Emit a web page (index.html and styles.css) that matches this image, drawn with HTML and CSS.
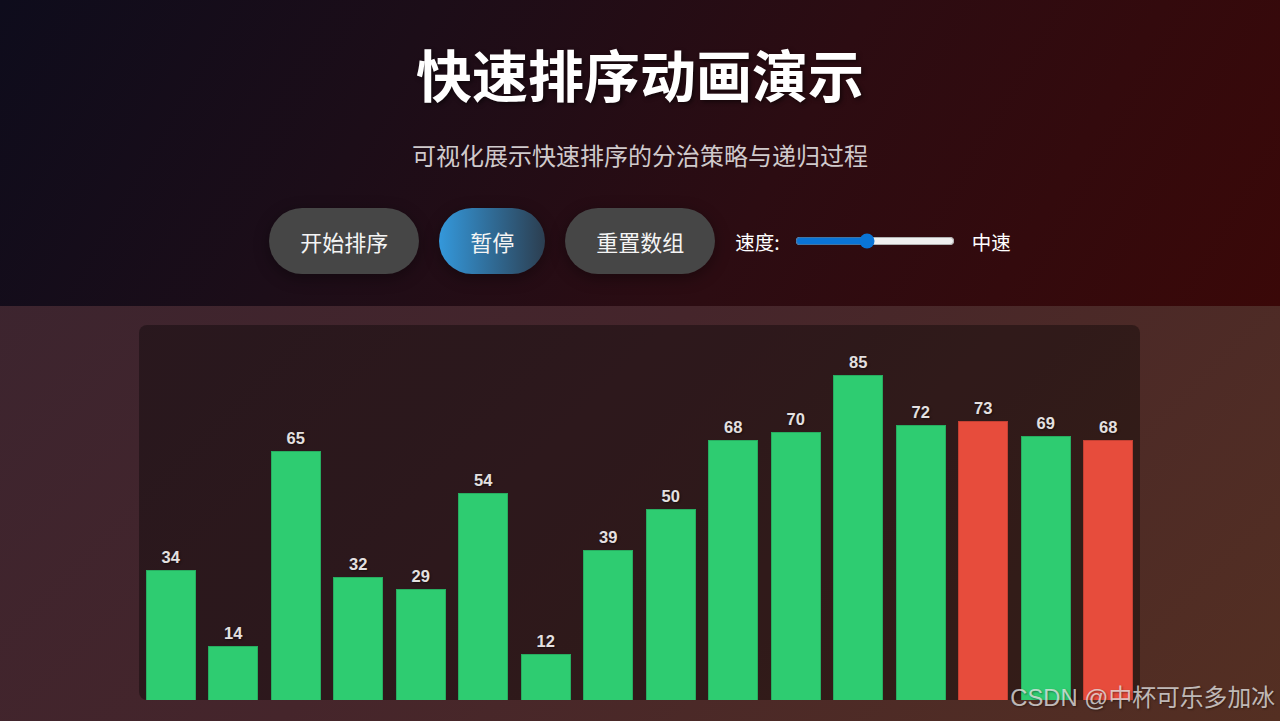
FILE: index.html
```html
<!DOCTYPE html>
<html lang="zh-CN">
<head>
<meta charset="utf-8">
<title>快速排序动画演示</title>
<link rel="stylesheet" href="styles.css">
</head>
<body>
<header class="hero">
  <h1 class="title">快速排序动画演示</h1>
  <p class="subtitle">可视化展示快速排序的分治策略与递归过程</p>
  <div class="controls">
    <button class="btn">开始排序</button>
    <button class="btn btn-active">暂停</button>
    <button class="btn">重置数组</button>
    <div class="speed">
      <span class="speed-label">速度:</span>
      <input class="speed-range" type="range" min="1" max="10" value="5">
      <span class="speed-value">中速</span>
    </div>
  </div>
</header>
<main class="stage">
  <div class="chart">
    <div class="col"><span class="val">34</span><div class="bar" style="height:130px"></div></div>
    <div class="col"><span class="val">14</span><div class="bar" style="height:54px"></div></div>
    <div class="col"><span class="val">65</span><div class="bar" style="height:249px"></div></div>
    <div class="col"><span class="val">32</span><div class="bar" style="height:123px"></div></div>
    <div class="col"><span class="val">29</span><div class="bar" style="height:111px"></div></div>
    <div class="col"><span class="val">54</span><div class="bar" style="height:207px"></div></div>
    <div class="col"><span class="val">12</span><div class="bar" style="height:46px"></div></div>
    <div class="col"><span class="val">39</span><div class="bar" style="height:150px"></div></div>
    <div class="col"><span class="val">50</span><div class="bar" style="height:191px"></div></div>
    <div class="col"><span class="val">68</span><div class="bar" style="height:260px"></div></div>
    <div class="col"><span class="val">70</span><div class="bar" style="height:268px"></div></div>
    <div class="col"><span class="val">85</span><div class="bar" style="height:325px"></div></div>
    <div class="col"><span class="val">72</span><div class="bar" style="height:275px"></div></div>
    <div class="col"><span class="val">73</span><div class="bar bar-red" style="height:279px"></div></div>
    <div class="col"><span class="val">69</span><div class="bar" style="height:264px"></div></div>
    <div class="col"><span class="val">68</span><div class="bar bar-red" style="height:260px"></div></div>
  </div>
  <div class="watermark">CSDN @中杯可乐多加冰</div>
</main>
</body>
</html>
```
FILE: styles.css
```css
* { box-sizing: border-box; }
html, body { margin: 0; padding: 0; }
body {
  width: 1280px;
  height: 721px;
  overflow: hidden;
  font-family: "Noto Sans CJK SC", "Noto Sans", sans-serif;
  background: linear-gradient(135deg, #392430 0%, #45252b 50%, #542f22 100%);
  color: #fff;
  display: flex;
  flex-direction: column;
}
.hero {
  height: 306px;
  padding-top: 39px;
  background: linear-gradient(120deg, #0e0c1c 0%, #1c0d18 30%, #2c0c12 60%, #3a0808 100%);
  display: flex;
  flex-direction: column;
  align-items: center;
}
.title {
  margin: 0;
  font-size: 56px;
  line-height: 68px;
  font-weight: 700;
  color: #fff;
  text-shadow: 2px 2px 4px rgba(0, 0, 0, 0.5);
}
.subtitle {
  margin: 32px 0 0;
  font-size: 24px;
  line-height: 32px;
  color: #d0cacc;
}
.controls {
  margin-top: 37px;
  display: flex;
  align-items: center;
  gap: 20px;
}
.btn {
  height: 66px;
  padding: 0 31px;
  border: none;
  border-radius: 33px;
  background: #464646;
  color: #f4f4f4;
  font-family: "Noto Sans CJK SC", sans-serif;
  font-size: 22px;
  box-shadow: 0 4px 15px rgba(0, 0, 0, 0.35);
}
.btn-active {
  background: linear-gradient(90deg, #3498db 0%, #2c3e50 100%);
}
.speed {
  display: flex;
  align-items: center;
  gap: 15px;
  font-size: 19.5px;
  color: #fff;
}
.speed-range {
  width: 160px;
  margin: 0 2px 0 0;
  accent-color: #0a74d6;
}
.stage {
  position: relative;
  flex: 1;
  padding: 19px 0 0 139px;
}
.chart {
  width: 1001px;
  height: 375px;
  padding: 0 6.75px;
  border-radius: 8px;
  background: rgba(0, 0, 0, 0.35);
  display: flex;
  align-items: flex-end;
  gap: 12.5px;
}
.col {
  width: 50px;
  display: flex;
  flex-direction: column;
  align-items: center;
  justify-content: flex-end;
}
.val {
  font-family: "Liberation Sans", Arial, sans-serif;
  font-weight: 700;
  font-size: 16.5px;
  line-height: 18px;
  margin-bottom: 4px;
  color: #e4e0e0;
  text-shadow: 1px 1px 2px rgba(0, 0, 0, 0.5);
}
.bar {
  width: 50px;
  background: #2ecc71;
  border: 1px solid rgba(0, 0, 0, 0.15);
  border-bottom: none;
}
.bar-red { background: #e74c3c; }
.watermark {
  position: absolute;
  right: 5px;
  bottom: 10px;
  font-family: "Liberation Sans", "Noto Sans CJK SC", sans-serif;
  font-size: 23.8px;
  line-height: 26px;
  color: rgba(235, 235, 235, 0.75);
  text-shadow: 1px 1px 2px rgba(0, 0, 0, 0.4);
}
```
